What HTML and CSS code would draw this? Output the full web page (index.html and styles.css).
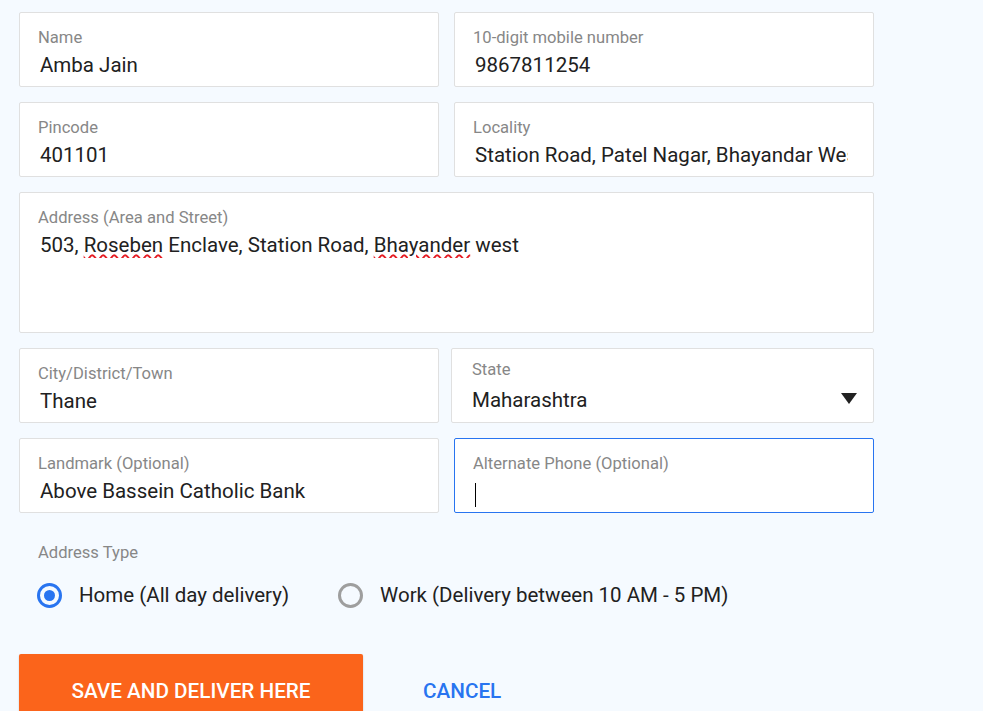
FILE: index.html
```html
<!DOCTYPE html>
<html>
<head>
<meta charset="utf-8">
<link rel="stylesheet" href="styles.css">
</head>
<body>
<div class="form">
  <div class="grid">
    <div class="field">
      <div class="label">Name</div>
      <div class="value">Amba Jain</div>
    </div>
    <div class="field">
      <div class="label">10-digit mobile number</div>
      <div class="value">9867811254</div>
    </div>
    <div class="field">
      <div class="label">Pincode</div>
      <div class="value">401101</div>
    </div>
    <div class="field">
      <div class="label">Locality</div>
      <div class="value">Station Road, Patel Nagar, Bhayandar West</div>
    </div>
    <div class="field area">
      <div class="label">Address (Area and Street)</div>
      <div class="value">503, <span class="spell">Roseben</span> Enclave, Station Road, <span class="spell">Bhayander</span> west</div>
    </div>
    <div class="field">
      <div class="label">City/District/Town</div>
      <div class="value">Thane</div>
    </div>
    <div class="field select">
      <div class="label">State</div>
      <div class="value">Maharashtra</div>
      <span class="arrow"></span>
    </div>
    <div class="field">
      <div class="label">Landmark (Optional)</div>
      <div class="value">Above Bassein Catholic Bank</div>
    </div>
    <div class="field focus">
      <div class="label">Alternate Phone (Optional)</div>
      <div class="value"><span class="caret"></span></div>
    </div>
  </div>
  <div class="type-label">Address Type</div>
  <div class="radios">
    <label class="radio"><span class="dot checked"></span>Home (All day delivery)</label>
    <label class="radio"><span class="dot"></span>Work (Delivery between 10 AM - 5 PM)</label>
  </div>
  <div class="actions">
    <button class="save">SAVE AND DELIVER HERE</button>
    <button class="cancel">CANCEL</button>
  </div>
</div>
</body>
</html>
```
FILE: styles.css
```css
html, body {
  margin: 0;
  padding: 0;
  background: #f5faff;
  font-family: Roboto, "Liberation Sans", Arial, sans-serif;
  overflow: hidden;
}
.form {
  padding: 12px 0 0 19px;
}
.grid {
  display: grid;
  grid-template-columns: 420px 420px;
  column-gap: 15px;
  row-gap: 15px;
  width: 855px;
}
.field {
  box-sizing: border-box;
  height: 75px;
  background: #fff;
  border: 1px solid #e0e0e0;
  border-radius: 2px;
  padding: 16px 25px 0 18px;
  position: relative;
  overflow: hidden;
}
.label {
  font-size: 16.6px;
  line-height: 18px;
  color: #878787;
  white-space: nowrap;
}
.value {
  font-size: 20.5px;
  line-height: 26px;
  color: #212121;
  margin-top: 5px;
  padding-left: 2px;
  white-space: nowrap;
  overflow: hidden;
}
.area {
  grid-column: 1 / 3;
  height: 141px;
}
.spell {
  text-decoration: underline wavy #e51c23;
  text-decoration-thickness: 1.5px;
  text-underline-offset: 2px;
}
.select {
  margin-left: -3px;
  padding-top: 12px;
  padding-left: 20px;
}
.select .value {
  padding-left: 0;
  margin-top: 8px;
}
.arrow {
  position: absolute;
  right: 16px;
  top: 44px;
  width: 0;
  height: 0;
  border-left: 8px solid transparent;
  border-right: 8px solid transparent;
  border-top: 11px solid #212121;
}
.focus {
  border-color: #2874f0;
}
.caret {
  display: inline-block;
  width: 1px;
  height: 24px;
  background: #000;
  vertical-align: middle;
  margin-top: 4px;
}
.type-label {
  margin: 30px 0 0 19px;
  font-size: 16.6px;
  color: #878787;
  line-height: 20px;
}
.radios {
  display: flex;
  gap: 49px;
  margin: 19px 0 0 18px;
}
.radio {
  display: flex;
  align-items: center;
  gap: 17px;
  font-size: 20.5px;
  color: #212121;
  line-height: 26px;
}
.dot {
  box-sizing: border-box;
  width: 25px;
  height: 25px;
  border-radius: 50%;
  border: 3px solid #9e9e9e;
  position: relative;
}
.dot.checked {
  border-color: #2874f0;
}
.dot.checked::after {
  content: "";
  position: absolute;
  left: 4px;
  top: 4px;
  width: 11px;
  height: 11px;
  border-radius: 50%;
  background: #2874f0;
}
.actions {
  display: flex;
  align-items: center;
  margin-top: 46px;
  gap: 60px;
}
.save {
  width: 344px;
  height: 74px;
  background: #fb641b;
  color: #fff;
  border: none;
  border-radius: 2px;
  font-family: Roboto, "Liberation Sans", Arial, sans-serif;
  font-weight: 500;
  font-size: 20.7px;
  box-shadow: 0 1px 2px rgba(0,0,0,0.2);
}
.cancel {
  background: none;
  border: none;
  padding: 0;
  color: #2874f0;
  font-family: Roboto, "Liberation Sans", Arial, sans-serif;
  font-weight: 500;
  font-size: 20.7px;
}
```
